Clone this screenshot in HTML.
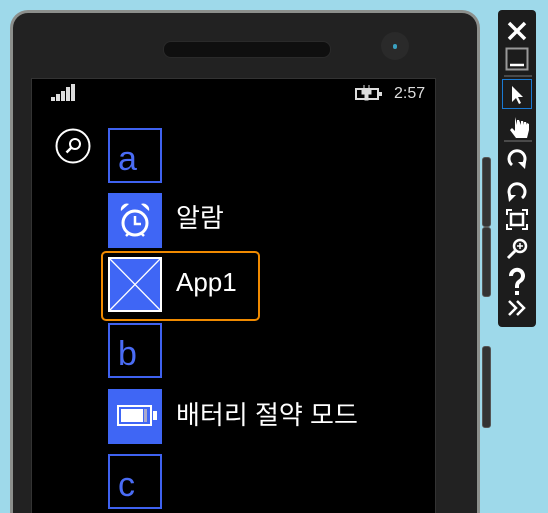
<!DOCTYPE html>
<html style="height:513px;overflow:hidden"><head><style>
body{margin:0;width:548px;height:513px;background:#9ed9ea;position:relative;overflow:hidden;font-family:"Liberation Sans","Noto Sans CJK KR",sans-serif}
.ph{position:absolute;left:10px;top:10px;width:470px;height:503px;background:#8c8f8c;border-radius:18px 18px 0 0}
.pi{position:absolute;left:13px;top:13px;width:464px;height:500px;background:#222;border-radius:15px 15px 0 0}
.btn{position:absolute;left:482px;width:7px;background:#333;border:1px solid #555;border-radius:3px}
.scr{position:absolute;left:31px;top:78px;width:403px;height:435px;background:#000;border:1px solid #333;border-bottom:0}
.t{position:absolute;left:108px;width:54px;height:55px;box-sizing:border-box}
.o{border:2px solid #3f62f0;color:#4a6cf5;font-size:34px;line-height:58px;padding-left:8px}
.f{background:#3f66f5}
.lb{position:absolute;left:176px;color:#fff;font-size:26px}
.tb{position:absolute;left:498px;top:10px;width:38px;height:317px;background:#1c1c1c;border-radius:4px}
</style></head><body>
<div class="ph"></div><div class="pi"></div>
<div style="position:absolute;left:163px;top:41px;width:166px;height:15px;background:#0f0f0f;border-radius:8px;border:1px solid #2a2a2a"></div>
<div style="position:absolute;left:381px;top:32px;width:28px;height:28px;border-radius:50%;background:#2a2a2a"></div>
<div style="position:absolute;left:393px;top:44px;width:4px;height:5px;background:#3aa0c0;border-radius:2px"></div>
<div class="btn" style="top:157px;height:68px"></div>
<div class="btn" style="top:227px;height:68px"></div>
<div class="btn" style="top:346px;height:80px"></div>
<div class="scr"></div>
<svg style="position:absolute;left:51px;top:84px" width="26" height="17"><g fill="#ddd"><rect x="0" y="13" width="4" height="4"/><rect x="5" y="10" width="4" height="7"/><rect x="10" y="7" width="4" height="10"/><rect x="15" y="3" width="4" height="14"/><rect x="20" y="0" width="4" height="17"/></g></svg>
<svg style="position:absolute;left:355px;top:85px" width="28" height="16"><rect x="1" y="4" width="22" height="10" fill="none" stroke="#ddd" stroke-width="2"/><rect x="24" y="7" width="3" height="4" fill="#ddd"/><path d="M9 0v5M14 0v5M7 5h9v4h-3v6h-3v-6h-3z" fill="#ddd" stroke="#ddd"/></svg>
<div style="position:absolute;left:394px;top:85px;color:#ddd;font-size:16px">2:57</div>
<svg style="position:absolute;left:54px;top:128px" width="38" height="38"><circle cx="19" cy="18" r="16.5" fill="none" stroke="#fff" stroke-width="2"/><circle cx="21" cy="16" r="5" fill="none" stroke="#fff" stroke-width="2"/><path d="M17.5 19.5l-5 5" stroke="#fff" stroke-width="2.5"/></svg>
<div class="t o" style="top:128px">a</div>
<div class="t f" style="top:193px"><svg width="54" height="55"><circle cx="27" cy="30" r="12" fill="none" stroke="#fff" stroke-width="3"/><path d="M27 23v8h6" fill="none" stroke="#fff" stroke-width="2.5"/><path d="M13 18a6 6 0 0 1 8-7zM41 18a6 6 0 0 0-8-7z" fill="#fff"/><path d="M18 43l3-3M36 43l-3-3" stroke="#fff" stroke-width="2.5"/></svg></div>
<div class="lb" style="top:198px">알람</div>
<div style="position:absolute;left:101px;top:251px;width:155px;height:66px;border:2px solid #f08a00;border-radius:5px"></div>
<div class="t f" style="top:257px"><svg width="54" height="55"><rect x="1" y="1" width="52" height="53" fill="none" stroke="#fff" stroke-width="2"/><path d="M1 1L53 54M53 1L1 54" stroke="#fff" stroke-width="1.3"/></svg></div>
<div class="lb" style="top:267px">App1</div>
<div class="t o" style="top:323px">b</div>
<div class="t f" style="top:389px"><svg width="54" height="55"><rect x="10" y="17" width="33" height="19" fill="none" stroke="#fff" stroke-width="2"/><rect x="13" y="20" width="22" height="13" fill="#fff"/><rect x="36" y="20" width="3" height="13" fill="#aac"/><rect x="45" y="22" width="4" height="9" fill="#fff"/></svg></div>
<div class="lb" style="top:395px">배터리 절약 모드</div>
<div class="t o" style="top:454px">c</div>
<div class="tb"><svg width="38" height="317" fill="none" stroke="#fff">
<path d="M11 13l16 16M27 13l-16 16" stroke-width="3.5"/>
<rect x="8.5" y="38.5" width="21" height="21" stroke="#999" stroke-width="2"/><path d="M12 55h14" stroke-width="2.5"/>
<path d="M6 66h28" stroke="#777"/>
<rect x="4.5" y="69.5" width="29" height="29" stroke="#1a7ad4"/>
<path d="M14 76v16l4-4 3 6 2-1-3-6h5z" fill="#fff" stroke="none"/>
<path d="M17 107v14l-3-3-2 2 6 8h11l2-8v-6l-2-1v2l-1-3h-2v3l-1-4h-2v4l-2-5h-2v5z" fill="#fff" stroke="none"/>
<path d="M6 131h28" stroke="#777"/>
<path d="M14 155a8 8 0 1 1 10 0" stroke-width="3"/><path d="M20 152l8 0-1 7z" fill="#fff" stroke="none"/>
<path d="M24 188a8 8 0 1 0-10 0" stroke-width="3"/><path d="M18 185l-8 0 1 7z" fill="#fff" stroke="none"/>
<path d="M9 205v-5h5M24 200h5v5M29 214v5h-5M14 219h-5v-5" stroke-width="2"/><rect x="13" y="204" width="12" height="11" stroke-width="2.5"/>
<circle cx="22" cy="236" r="6" stroke-width="2.5"/><path d="M22 233v6M19 236h6" stroke-width="1.5"/><path d="M17 241l-7 7" stroke-width="3"/>
<path d="M13 266a6 6 0 1 1 9 5q-3 2-3 5v2" stroke-width="4"/><rect x="17" y="281" width="4" height="4" fill="#fff" stroke="none"/>
<path d="M11 291l7 7-7 7M19 291l7 7-7 7" stroke-width="2.5"/>
</svg></div>
</body></html>
